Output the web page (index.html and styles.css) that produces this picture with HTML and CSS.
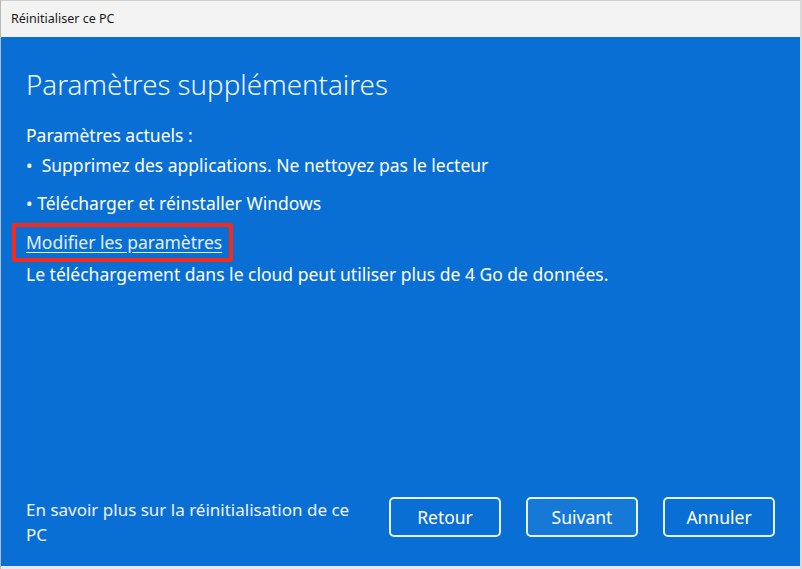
FILE: index.html
```html
<!DOCTYPE html>
<html>
	<head>
		<meta charset="UTF-8">
		<title>Réinitialiser ce PC</title>
		<link rel="stylesheet" href="styles.css">
	</head>
	<body>
		<section class="window">
			<div class="titlebar">Réinitialiser ce PC</div>
			<div class="panel">
				<h1 class="heading">Paramètres supplémentaires</h1>
				<p class="line">Paramètres actuels :</p>
				<p class="line bullet">•&nbsp; Supprimez des applications. Ne nettoyez pas le lecteur</p>
				<p class="line bullet">• Télécharger et réinstaller Windows</p>
				<div class="mark">
					<a class="link" href="#">Modifier les paramètres</a>
				</div>
				<p class="line">Le téléchargement dans le cloud peut utiliser plus de 4 Go de données.</p>
				<div class="footer">
					<p class="more">En savoir plus sur la réinitialisation de ce PC</p>
					<div class="btns">
						<span class="btn">Retour</span>
						<span class="btn next">Suivant</span>
						<span class="btn">Annuler</span>
					</div>
				</div>
			</div>
			<div class="strip"></div>
		</section>
	</body>
</html>
```

FILE: styles.css
```css
html,body{
	margin:0;
	padding:0;
}
body{
	font-family:"Noto Sans","Open Sans",sans-serif;
	background:#fff;
}
.window{
	height:569px;
	display:flex;
	flex-direction:column;
	border-left:1px solid #b9b9b9;
	border-right:2px solid #d9d9d9;
	box-sizing:border-box;
}
.titlebar{
	height:37px;
	box-sizing:border-box;
	border-top:1px solid #cfcfcf;
	background:#f3f3f3;
	color:#1a1a1a;
	font-size:12.5px;
	line-height:36px;
	padding-left:10px;
}
.panel{
	flex:1;
	background:#0a6fd4;
	color:#fff;
	padding:0 25px 0 25px;
	display:flex;
	flex-direction:column;
}
.heading{
	margin:29px 0 22px;
	font-size:27.7px;
	font-weight:300;
	line-height:36px;
	color:#f2f8ff;
}
.line{
	margin:0;
	font-size:17.5px;
	line-height:22px;
}
.bullet{
	margin-top:8px;
}
.bullet + .bullet{
	margin-top:16px;
}
.mark{
	margin:9px 0 0 -14px;
	width:203px;
	height:31px;
	border:4px solid #f42a1c;
	border-radius:2px;
	padding-left:10px;
	line-height:31px;
}
.link{
	color:#e2efff;
	font-size:17.5px;
	text-decoration:underline;
	text-underline-offset:3px;
}
.mark + .line{
	margin-top:1px;
}
.footer{
	margin-top:auto;
	margin-bottom:19px;
	display:flex;
	align-items:flex-start;
	justify-content:space-between;
}
.more{
	margin:0;
	width:345px;
	font-size:17px;
	line-height:25px;
	color:#eef5ff;
}
.btns{
	display:flex;
	gap:25px;
}
.btn{
	width:112px;
	height:40px;
	box-sizing:border-box;
	border:2px solid #e6f1ff;
	border-radius:5px;
	display:flex;
	align-items:center;
	justify-content:center;
	font-size:17.5px;
}
.next{
	background:#1679d8;
}
.strip{
	height:3px;
	background:#e9e9e9;
}
```
